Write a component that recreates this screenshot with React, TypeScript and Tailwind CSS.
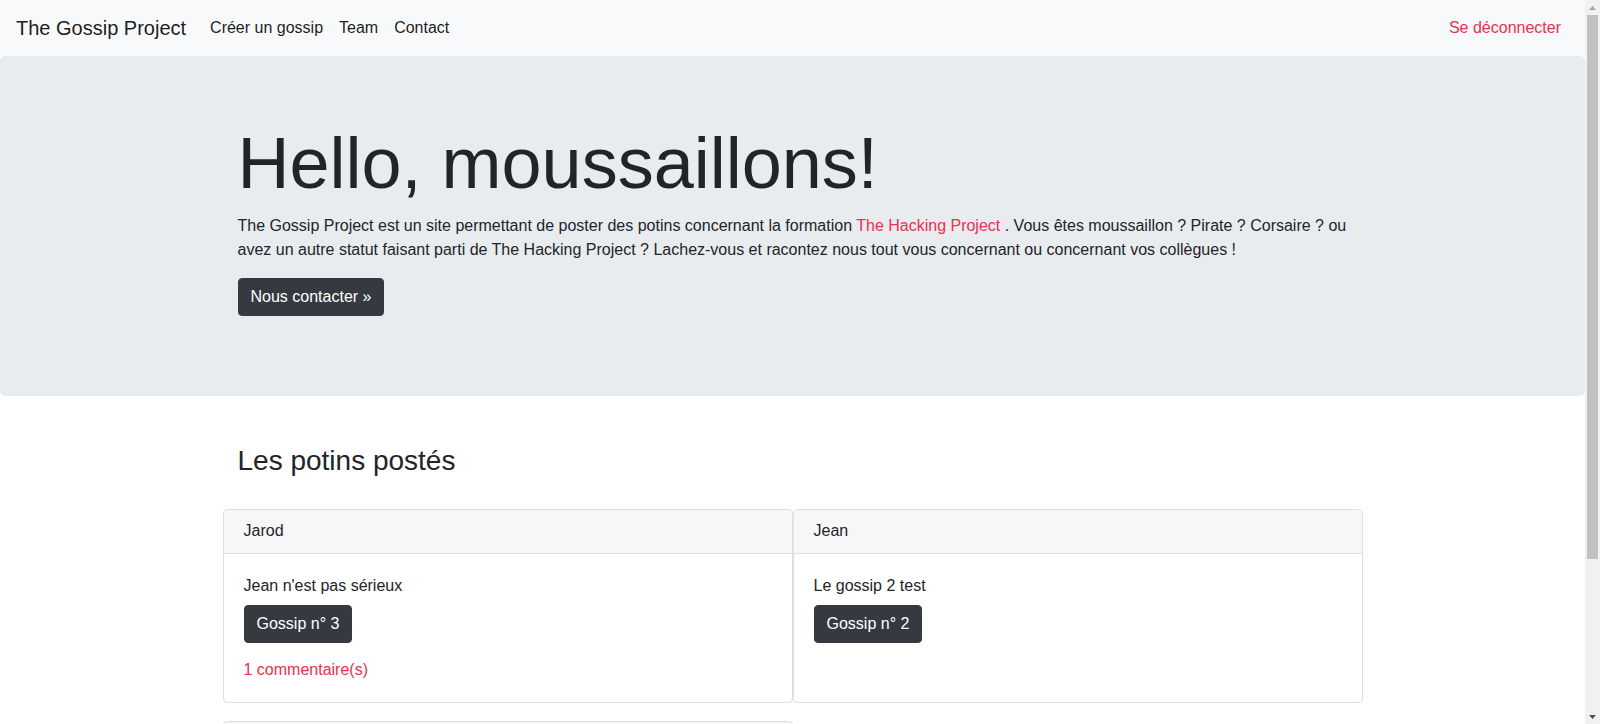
const gossips = [
  { id: 3, author: "Jarod", content: "Jean n'est pas sérieux", comments: 1 },
  { id: 2, author: "Jean", content: "Le gossip 2 test", comments: 0 },
  { id: 1, author: "Jarod", content: "Premier gossip", comments: 0 },
];

const App = () => {
  return (
    <div className="flex h-screen overflow-hidden bg-white text-[#212529] font-['Liberation_Sans',Arial,sans-serif] text-base leading-6">
      <div className="flex-1 min-w-0 overflow-hidden">
        {/* Navbar */}
        <nav className="flex items-center h-14 px-4 bg-[#f8f9fa]">
          <a className="text-xl leading-[30px] mr-4 text-black/90" href="#">
            The Gossip Project
          </a>
          <ul className="flex">
            <li><a className="block px-2 py-2 text-black/90" href="#">Créer un gossip</a></li>
            <li><a className="block px-2 py-2 text-black/90" href="#">Team</a></li>
            <li><a className="block px-2 py-2 text-black/90" href="#">Contact</a></li>
          </ul>
          <a className="ml-auto block px-2 py-2 text-[#ec3050]" href="#">
            Se déconnecter
          </a>
        </nav>

        {/* Jumbotron */}
        <div className="bg-[#e9ecef] rounded-[5px] py-16 mb-8">
          <div className="mx-auto w-[1140px] px-[15px]">
            <h1 className="text-[72px] leading-[1.2] font-light mb-2">Hello, moussaillons!</h1>
            <p className="mb-4">
              The Gossip Project est un site permettant de poster des potins concernant la formation{" "}
              <a className="text-[#ec3050]" href="#">The Hacking Project</a> . Vous êtes moussaillon ? Pirate ?
              Corsaire ? ou avez un autre statut faisant parti de The Hacking Project ? Lachez-vous et racontez nous
              tout vous concernant ou concernant vos collègues !
            </p>
            <p className="mb-4">
              <a
                className="inline-block bg-[#343a40] border border-[#343a40] text-white rounded-[4px] px-3 py-[6px]"
                href="#"
              >
                Nous contacter »
              </a>
            </p>
          </div>
        </div>

        {/* Potins */}
        <div className="mx-auto w-[1140px] pt-4 pb-10">
          <h3 className="px-[15px] mb-[31px] text-[28px] leading-[1.2]">Les potins postés</h3>
          <div className="grid grid-cols-2 gap-y-[18px]">
            {gossips.map((g) => (
              <div key={g.id} className="border border-[#dfdfdf] rounded-[4px] bg-white">
                <div className="h-[44px] flex items-center px-5 bg-[#f7f7f7] border-b border-[#dfdfdf] rounded-t-[4px]">
                  {g.author}
                </div>
                <div className="p-5">
                  <p>{g.content}</p>
                  <a
                    className="inline-block mt-[7px] bg-[#343a40] border border-[#343a40] text-white rounded-[4px] px-3 py-[6px]"
                    href="#"
                  >
                    Gossip n° {g.id}
                  </a>
                  {g.comments > 0 && (
                    <p className="mt-[15px] text-[#ec3050]">{g.comments} commentaire(s)</p>
                  )}
                </div>
              </div>
            ))}
          </div>
        </div>
      </div>

      {/* Scrollbar */}
      <div className="w-[15px] shrink-0 flex flex-col bg-[#f1f1f1]">
        <div className="h-[15px] flex items-center justify-center">
          <svg width="7" height="4" viewBox="0 0 7 4"><path d="M3.5 0L7 4H0z" fill="#a3a3a3" /></svg>
        </div>
        <div className="mx-[2px] h-[544px] bg-[#c1c1c1]" />
        <div className="flex-1" />
        <div className="h-[15px] flex items-center justify-center">
          <svg width="7" height="4" viewBox="0 0 7 4"><path d="M0 0H7L3.5 4z" fill="#505050" /></svg>
        </div>
      </div>
    </div>
  );
};

export default App;
